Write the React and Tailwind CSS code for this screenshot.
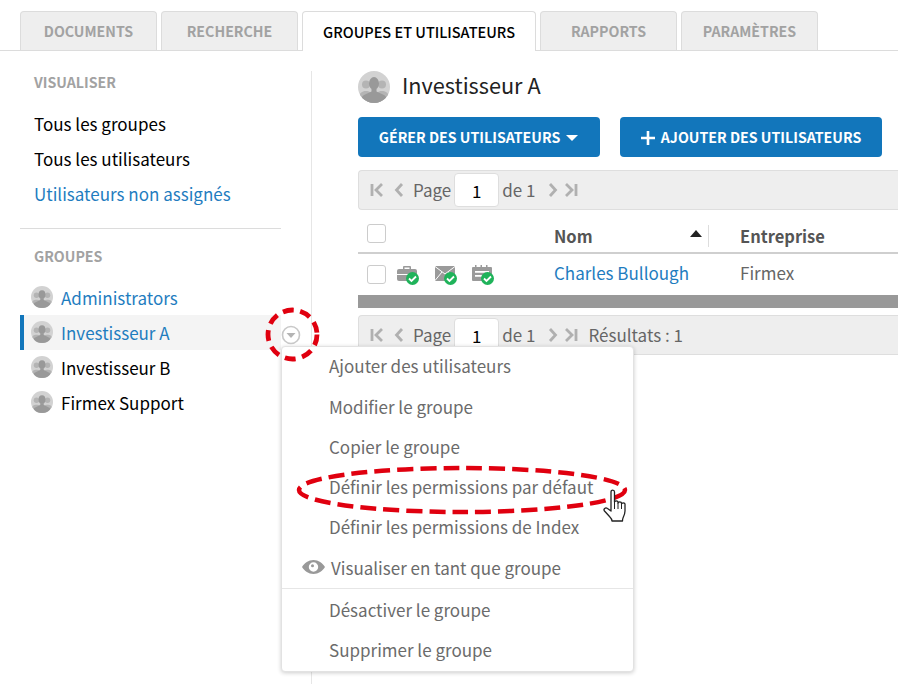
import React from "react";

const FONT = { fontFamily: '"Noto Sans CJK SC", "Open Sans", sans-serif' };

function Avatar({ size = 22 }) {
  return (
    <svg width={size} height={size} viewBox="0 0 32 32" className="shrink-0 mb-[1px]">
      <defs>
        <clipPath id={`c${size}`}><circle cx="16" cy="16" r="16" /></clipPath>
      </defs>
      <circle cx="16" cy="16" r="16" fill="#d2d2d2" />
      <g clipPath={`url(#c${size})`}>
        <circle cx="8" cy="13.5" r="4" fill="#b4b4b4" />
        <circle cx="24" cy="13.5" r="4" fill="#b4b4b4" />
        <path d="M1 27c0-5 3-7 7-7s7 2 7 7v5H1z" fill="#b4b4b4" />
        <path d="M17 27c0-5 3-7 7-7s7 2 7 7v5H17z" fill="#b4b4b4" />
        <ellipse cx="16" cy="12.5" rx="5" ry="6.5" fill="#999" />
        <path d="M13.5 18h5v2.5l7.5 3.5c2 1 2.5 2.5 2.5 8h-25c0-5.5.5-7 2.5-8l7.5-3.5z" fill="#999" />
      </g>
    </svg>
  );
}

function Tab({ label, active, w }) {
  if (active) {
    return (
      <div className={`${w} h-[40px] -mb-px bg-white border border-b-0 border-[#dcdcdc] rounded-t-[4px] flex items-center justify-center text-[14.500px] font-medium text-black`}>
        {label}
      </div>
    );
  }
  return (
    <div className={`${w} h-[39px] bg-[#eeeeee] border border-b-0 border-[#dcdcdc] rounded-t-[4px] flex items-center justify-center pt-[1px] text-[14.200px] font-bold text-[#a2a2a2]`}>
      {label}
    </div>
  );
}

function PagerIcon({ type }) {
  const d = {
    first: "M2 3v12M12 3L6 9l6 6",
    prev: "M10 3L4.500 9l5.500 6",
    next: "M4 3l5.500 6L4 15",
    last: "M2 3l6 6-6 6M12 3v12",
  }[type];
  return (
    <svg width="14" height="18" viewBox="0 0 14 18" fill="none" stroke="#b0b0b0" strokeWidth="2.800" className="shrink-0">
      <path d={d} />
    </svg>
  );
}

function Pager({ results }) {
  return (
    <div className="h-[40px] bg-[#eeeeee] border border-r-0 border-[#dedede] rounded-l-[4px] flex items-center pl-[11px] text-[17px] text-[#666666] leading-none">
      <PagerIcon type="first" />
      <span className="ml-[8px]"><PagerIcon type="prev" /></span>
      <span className="ml-[7px] pb-[2px]">Page</span>
      <div className="ml-[3px] w-[45px] h-[34px] bg-white border border-[#dedede] rounded-[4px] flex items-center justify-center text-black">1</div>
      <span className="ml-[3px] pb-[2px]">de 1</span>
      <span className="ml-[11px]"><PagerIcon type="next" /></span>
      <span className="ml-[4px]"><PagerIcon type="last" /></span>
      {results && <span className="ml-[10px] pb-[2px]">Résultats : 1</span>}
    </div>
  );
}

function Check() {
  return (
    <span className="absolute left-[9px] top-[7px] w-[13px] h-[13px] rounded-full bg-[#1fb35a] flex items-center justify-center">
      <svg width="11" height="11" viewBox="0 0 11 11" fill="none" stroke="#fff" strokeWidth="1.800"><path d="M2 5.500l2.500 2.500L9 3.500" /></svg>
    </span>
  );
}

function StatusIcon({ children }) {
  return (
    <span className="relative inline-block w-[20px] h-[16px]">
      <svg width="20" height="16" viewBox="0 0 20 16" fill="#9a9a9a">{children}</svg>
      <Check />
    </span>
  );
}

function GroupRow({ label, blue, active }) {
  return (
    <div className={`h-[35px] flex items-center ${active ? "bg-[#f4f4f4] border-l-[4px] border-[#1276bb] pl-[7px] pr-[9px]" : "pl-[11px]"}`}>
      <Avatar />
      <span className={`ml-[8px] text-[17px] leading-[22px] ${blue ? "text-[#1f7dbf]" : "text-black"}`}>{label}</span>
    </div>
  );
}

function MenuItem({ label }) {
  return <div className="h-[40.500px] pl-[47px] flex items-center pb-[2px] text-[17px] text-[#6b6b6b]">{label}</div>;
}

export default function App() {
  return (
    <div className="relative w-[898px] h-[684px] overflow-hidden bg-white" style={FONT}>
      {/* Tabs */}
      <div className="pt-[11px] pl-[20px] h-[51px] flex gap-[4px] border-b border-[#dcdcdc]">
        <Tab label="DOCUMENTS" w="w-[137px]" />
        <Tab label="RECHERCHE" w="w-[137px]" />
        <Tab label="GROUPES ET UTILISATEURS" w="w-[234px]" active />
        <Tab label="RAPPORTS" w="w-[137px]" />
        <Tab label="PARAMÈTRES" w="w-[137px]" />
      </div>

      <div className="flex">
        {/* Sidebar */}
        <div className="w-[292px] ml-[20px] h-[633px] mt-[20px] border-r border-[#e6e6e6] shrink-0">
          <div className="w-[261px]">
            <div className="pl-[14px] h-[22px] flex items-center pt-[1px] text-[14.200px] font-bold text-[#a2a2a2]">VISUALISER</div>
            <div className="mt-[15px] pl-[14px] text-[17px] leading-[35px]">
              <div className="text-black -translate-y-[2px]">Tous les groupes</div>
              <div className="text-black -translate-y-[2px]">Tous les utilisateurs</div>
              <div className="text-[#1f7dbf] -translate-y-[2px]">Utilisateurs non assignés</div>
            </div>
            <div className="mt-[15px] border-t border-[#dcdcdc]" />
            <div className="mt-[16px] pl-[14px] h-[22px] flex items-center pt-[1px] text-[14.200px] font-bold text-[#a2a2a2]">GROUPES</div>
            <div className="mt-[13px]">
              <GroupRow label="Administrators" blue />
              <GroupRow label="Investisseur A" blue active />
              <GroupRow label="Investisseur B" />
              <GroupRow label="Firmex Support" />
            </div>
          </div>
        </div>

        {/* Main */}
        <div className="ml-[46px] flex-1 min-w-0 pt-[20px]">
          <div className="flex items-center h-[32px]">
            <Avatar size={32} />
            <span className="ml-[12px] text-[21.700px] leading-[28px] pb-[5px] text-[#222222]">Investisseur A</span>
          </div>
          <div className="mt-[14px] flex gap-[20px]">
            <div className="w-[242px] h-[40px] bg-[#1276bb] rounded-[4px] flex items-center justify-center pt-[1px] text-white text-[14.200px] font-bold">
              GÉRER DES UTILISATEURS
              <svg width="14" height="8" viewBox="0 0 14 8" className="ml-[5px]" fill="#fff"><path d="M1 1h12L7 7z" /></svg>
            </div>
            <div className="w-[262px] h-[40px] bg-[#1276bb] rounded-[4px] flex items-center justify-center pt-[1px] text-white text-[14.200px] font-bold">
              <svg width="14" height="14" viewBox="0 0 14 14" className="mr-[6px]" fill="#fff"><path d="M5.700 0h2.600v5.700H14v2.600H8.300V14H5.700V8.300H0V5.700h5.700z" /></svg>
              AJOUTER DES UTILISATEURS
            </div>
          </div>
          <div className="mt-[13px]"><Pager /></div>

          {/* Table */}
          <div className="h-[44px] border-b-2 border-[#cfcfcf] flex relative">
            <span className="mt-[14px] ml-[9px] w-[19px] h-[19px] bg-white border border-[#cccccc] rounded-[3px] shrink-0" />
            <span className="ml-[168px] mt-[15px] text-[16.500px] font-bold text-[#555555] leading-[22px] w-[136px]">Nom</span>
            <svg width="12" height="7" viewBox="0 0 12 7" className="mt-[20px] shrink-0" fill="#222"><path d="M6 0l6 7H0z" /></svg>
            <span className="ml-[6px] mt-[15px] h-[22px] border-l border-[#dddddd]" />
            <span className="ml-[31px] mt-[15px] text-[16.500px] font-bold text-[#555555] leading-[22px]">Entreprise</span>
          </div>
          <div className="h-[41px] flex items-center">
            <span className="ml-[9px] w-[19px] h-[19px] bg-white border border-[#cccccc] rounded-[3px] shrink-0" />
            <span className="ml-[11px] flex gap-[17.500px] w-[157px] shrink-0 -translate-y-[2px]">
              <StatusIcon>
                <path d="M7 1h6a1 1 0 011 1v2h4a2 2 0 012 2v3H0V6a2 2 0 012-2h4V2a1 1 0 011-1zm.500 1.500V4h5V2.500z" fillRule="evenodd" />
                <path d="M0 10h20v4a2 2 0 01-2 2H2a2 2 0 01-2-2z" />
              </StatusIcon>
              <StatusIcon>
                <rect x="0" y="1" width="20" height="15" rx="1" />
                <path d="M0 1.500l10 7.500 10-7.500M0 15.500l7-8.500M20 15.500l-7-8.500" fill="none" stroke="#fff" strokeWidth="1" />
              </StatusIcon>
              <StatusIcon>
                <path fillRule="evenodd" d="M1 2h2V0h1.500v2h4V0H10v2h4V0h1.500v2H19a1 1 0 011 1v12a1 1 0 01-1 1H1a1 1 0 01-1-1V3a1 1 0 011-1zm2 4v1.800h14V6zm0 4v1.800h9V10z" />
              </StatusIcon>
            </span>
            <span className="text-[17px] leading-[22px] pb-[3px] text-[#1f7dbf] w-[186px] shrink-0">Charles Bullough</span>
            <span className="text-[17px] leading-[22px] pb-[3px] text-[#666666]">Firmex</span>
          </div>
          <div className="h-[13px] bg-[#999999]" />
          <div className="mt-[7px]"><Pager results /></div>
        </div>
      </div>

      {/* Dropdown menu */}
      <div className="absolute left-[281px] top-[346px] w-[353px] h-[326px] bg-white border border-[#e2e2e2] rounded-[4px] shadow-[0_1px_4px_rgba(0,0,0,0.2)] flex flex-col">
        <MenuItem label="Ajouter des utilisateurs" />
        <MenuItem label="Modifier le groupe" />
        <MenuItem label="Copier le groupe" />
        <MenuItem label="Définir les permissions par défaut" />
        <MenuItem label="Définir les permissions de Index" />
        <div className="h-[40.500px] pl-[20px] flex items-center text-[17px] text-[#6b6b6b]">
          <svg width="23" height="14" viewBox="0 0 23 14" fill="#999999" className="mr-[6px] mb-[2px]">
            <path fillRule="evenodd" d="M11.500 0C6.500 0 2.500 3 0 7c2.500 4 6.500 7 11.500 7S20.500 11 23 7c-2.500-4-6.500-7-11.500-7zm0 2.300a4.700 4.700 0 110 9.400 4.700 4.700 0 010-9.400zm-1 2a1.500 1.500 0 100 3 1.500 1.500 0 000-3z" />
          </svg>
          <span>Visualiser en tant que groupe</span>
        </div>
        <div className="border-t border-[#e6e6e6]" />
        <div className="mt-[1px]">
          <MenuItem label="Désactiver le groupe" />
          <MenuItem label="Supprimer le groupe" />
        </div>
      </div>

      {/* Row caret button */}
      <svg width="20" height="20" viewBox="0 0 20 20" className="absolute left-[281px] top-[325px]">
        <circle cx="10" cy="10" r="8.500" fill="#fff" stroke="#c8c8c8" strokeWidth="1.600" />
        <path d="M5.500 8h9L10 13z" fill="#b4b4b4" />
      </svg>

      {/* Red annotations */}
      <svg width="898" height="684" className="absolute inset-0 pointer-events-none" fill="none">
        <circle cx="292.500" cy="334.500" r="24.500" stroke="#e0000f" strokeWidth="4.800" strokeDasharray="11 6.500" />
        <ellipse cx="462" cy="490" rx="163" ry="22" stroke="#e0000f" strokeWidth="4.500" strokeDasharray="16 7" />
      </svg>

      {/* Hand cursor */}
      <svg width="26" height="34" viewBox="0 0 26 34" className="absolute left-[603px] top-[489px]">
        <path
          d="M8 3c0-2.500 3.500-2.500 3.500 0v10c0-1.500 3.500-1.500 3.500 0v1c0-1.500 3.500-1.500 3.500 0v1c0-1.500 3.500-1.500 3.500 0v7c0 3-1 5-2 7-.5 1-.5 2-.5 3H9c0-2-1-3-2.500-4.500L1.500 22c-1.500-2 1-4 3-2.500L8 22z"
          fill="#fff" stroke="#222" strokeWidth="1.300" strokeLinejoin="round"
        />
        <path d="M11.500 13v7M15 14v6M18.500 15v5" stroke="#222" strokeWidth="1" fill="none" />
      </svg>
    </div>
  );
}
